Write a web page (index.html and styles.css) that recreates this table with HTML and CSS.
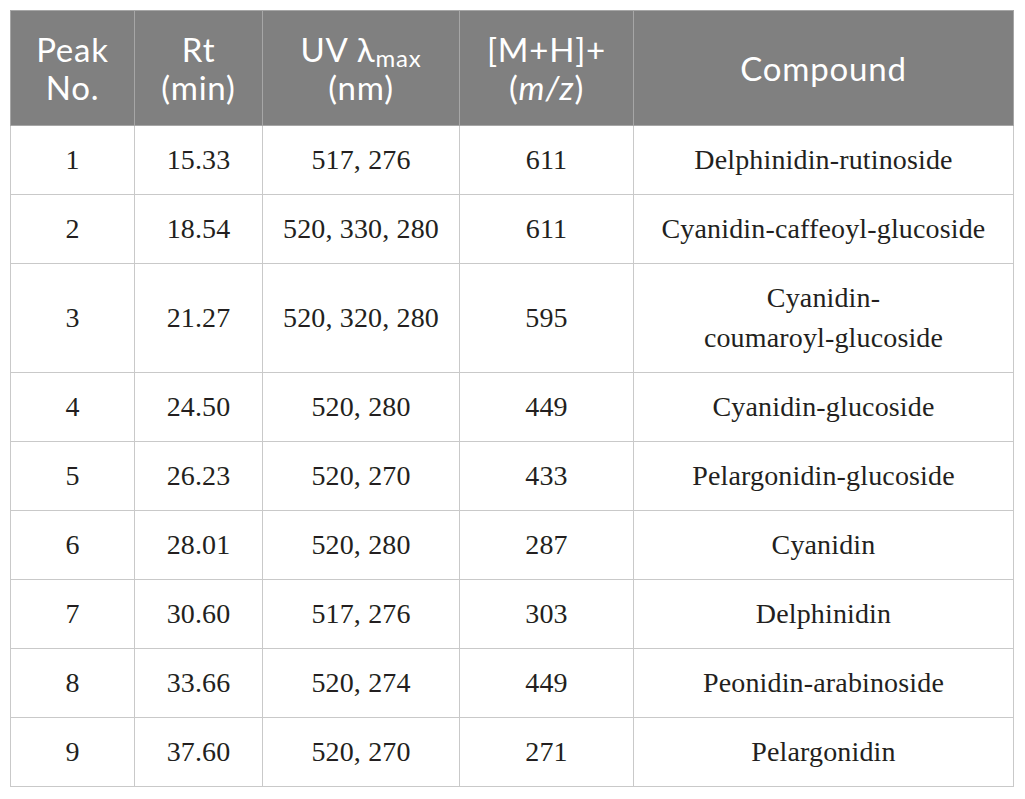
FILE: index.html
```html
<!DOCTYPE html>
<html lang="en">
<head>
  <meta charset="UTF-8" />
  <title>Anthocyanin peaks</title>
  <link rel="stylesheet" href="styles.css">
</head>
<body>

  <table class="peaks">
    <colgroup>
      <col class="c-peak">
      <col class="c-rt">
      <col class="c-uv">
      <col class="c-mz">
      <col class="c-name">
    </colgroup>
    <thead>
      <tr>
        <th>Peak<br>No.</th>
        <th>Rt<br>(min)</th>
        <th>UV &lambda;<sub>max</sub><br>(nm)</th>
        <th>[M+H]+<br>(<i>m/z</i>)</th>
        <th>Compound</th>
      </tr>
    </thead>
    <tbody>
      <tr><td>1</td><td>15.33</td><td>517, 276</td><td>611</td><td>Delphinidin-rutinoside</td></tr>
      <tr><td>2</td><td>18.54</td><td>520, 330, 280</td><td>611</td><td>Cyanidin-caffeoyl-glucoside</td></tr>
      <tr><td>3</td><td>21.27</td><td>520, 320, 280</td><td>595</td><td>Cyanidin-<br>coumaroyl-glucoside</td></tr>
      <tr><td>4</td><td>24.50</td><td>520, 280</td><td>449</td><td>Cyanidin-glucoside</td></tr>
      <tr><td>5</td><td>26.23</td><td>520, 270</td><td>433</td><td>Pelargonidin-glucoside</td></tr>
      <tr><td>6</td><td>28.01</td><td>520, 280</td><td>287</td><td>Cyanidin</td></tr>
      <tr><td>7</td><td>30.60</td><td>517, 276</td><td>303</td><td>Delphinidin</td></tr>
      <tr><td>8</td><td>33.66</td><td>520, 274</td><td>449</td><td>Peonidin-arabinoside</td></tr>
      <tr><td>9</td><td>37.60</td><td>520, 270</td><td>271</td><td>Pelargonidin</td></tr>
    </tbody>
  </table>

</body>
</html>
```

FILE: styles.css
```css
body {
  margin: 0;
  padding: 10px 12px 10px 10px;
  background: #fff;
}

.peaks {
  width: 1003px;
  border-collapse: collapse;
  table-layout: fixed;
  font-family: 'Liberation Serif', 'Times New Roman', serif;
  color: #231f20;
}

.c-peak { width: 124px; }
.c-rt { width: 128px; }
.c-uv { width: 197px; }
.c-mz { width: 174px; }
.c-name { width: 380px; }

th {
  background: #808080;
  color: #fff;
  font-family: Lato, 'Open Sans', sans-serif;
  font-weight: normal;
  font-size: 33px;
  letter-spacing: 0.8px;
  line-height: 38px;
  padding: 19px 4px 19px;
  border: 1px solid #a6a6a6;
  text-align: center;
}

th sub {
  font-size: 24px;
  vertical-align: -5px;
  line-height: 0;
}

td {
  font-size: 28px;
  letter-spacing: 0.15px;
  line-height: 40px;
  padding: 14px 4px;
  border: 1px solid #c9c9c9;
  text-align: center;
}
```
